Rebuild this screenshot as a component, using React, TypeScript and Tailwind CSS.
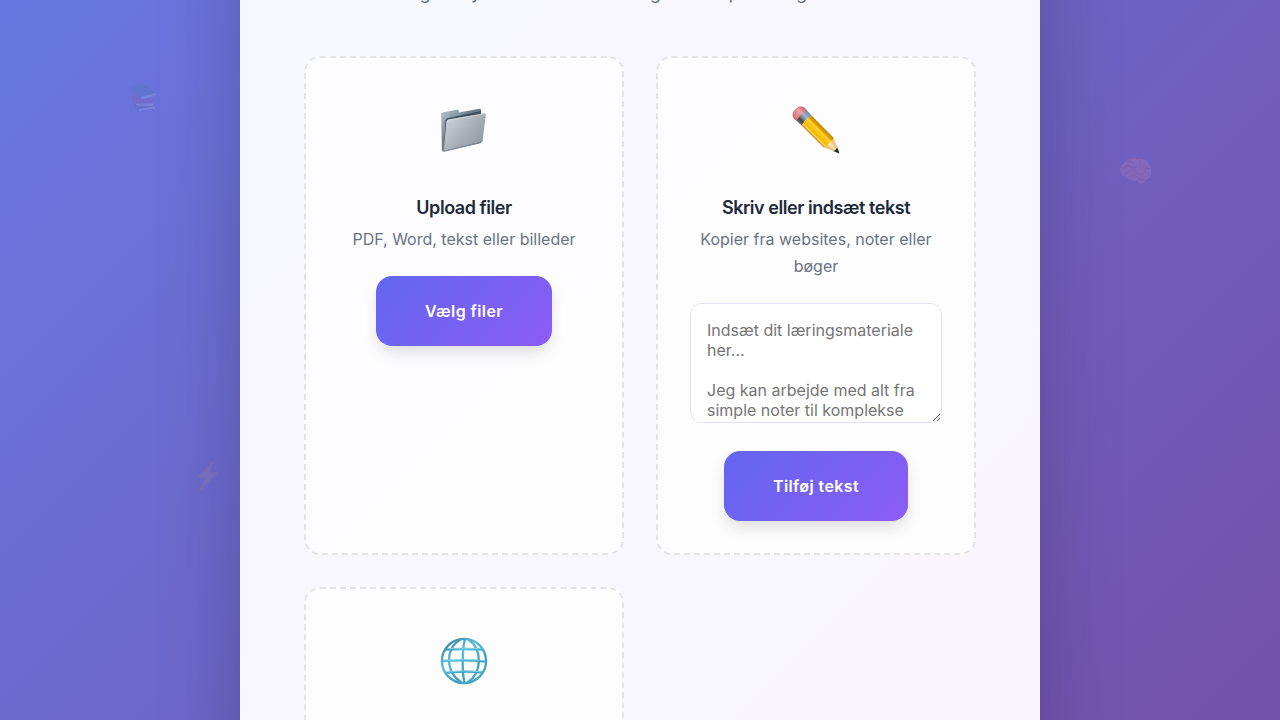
import type { ReactNode } from "react";

function FolderIcon() {
  return (
    <svg width="50" height="50" viewBox="0 0 50 50">
      <defs>
        <linearGradient id="folderBack" x1="0" y1="0" x2="1" y2="1">
          <stop offset="0" stopColor="#b9c6cf" />
          <stop offset="0.4" stopColor="#6f818e" />
          <stop offset="1" stopColor="#3e505d" />
        </linearGradient>
        <linearGradient id="folderFront" x1="0" y1="0" x2="1" y2="0.8">
          <stop offset="0" stopColor="#d3dae2" />
          <stop offset="0.5" stopColor="#adb4bc" />
          <stop offset="1" stopColor="#8c949d" />
        </linearGradient>
      </defs>
      <path d="M2.2 9.2Q2 7.8 3.5 7.5L18 4.8Q19.6 4.5 19.8 6V7.4L40.5 3.8Q42 3.6 42 5V38L5.5 46.5Q3 47 2.9 45Z" fill="url(#folderBack)" />
      <path d="M6.5 15.5L8.2 13.2 42 6V14L7 45.5H5Z" fill="#40525f" />
      <path d="M9.3 14.6L45.3 8.3Q47 8.2 46.8 10L43.6 35.5Q43.4 37.3 41.8 37.8L6 46.6Q4.5 46.8 4.8 45L7.4 17Q7.7 14.9 9.3 14.6Z" fill="url(#folderFront)" />
      <path d="M8 17Q8.2 15.3 9.6 15L45.5 8.8" fill="none" stroke="#dbe2e7" strokeWidth="0.6" />
      <path d="M5.4 46L41.8 37.2Q43 36.8 43.2 35.4" fill="none" stroke="#727a83" strokeWidth="0.8" />
    </svg>
  );
}

function PencilIcon() {
  return (
    <svg width="50" height="50" viewBox="0 0 50 50">
      <defs>
        <linearGradient id="eraser" x1="0" y1="0" x2="0" y2="1">
          <stop offset="0" stopColor="#c96570" />
          <stop offset="0.4" stopColor="#f5a2a7" />
          <stop offset="1" stopColor="#d36d77" />
        </linearGradient>
        <linearGradient id="ferrule" x1="0" y1="0" x2="0" y2="1">
          <stop offset="0" stopColor="#6682a5" />
          <stop offset="0.35" stopColor="#a0b5ca" />
          <stop offset="0.6" stopColor="#737c85" />
          <stop offset="0.75" stopColor="#414141" />
          <stop offset="1" stopColor="#77777a" />
        </linearGradient>
        <linearGradient id="barrel" x1="0" y1="0" x2="0" y2="1">
          <stop offset="0" stopColor="#b98300" />
          <stop offset="0.18" stopColor="#d99b00" />
          <stop offset="0.3" stopColor="#f3b806" />
          <stop offset="0.36" stopColor="#ffdc4c" />
          <stop offset="0.45" stopColor="#ffc817" />
          <stop offset="0.76" stopColor="#f5b60b" />
          <stop offset="0.84" stopColor="#ffdd59" />
          <stop offset="1" stopColor="#b67f00" />
        </linearGradient>
      </defs>
      <g transform="translate(7 7) rotate(45)">
        <path d="M3 -7.5Q-3.5 -7 -3.5 0T3 7.5L5.5 7Q4 0 5.5 -7Z" fill="url(#eraser)" stroke="#ad555e" strokeWidth="0.6" />
        <path d="M5 -7.3Q3.3 0 5 7.3L12 7Q10.3 0 12 -7Z" fill="url(#ferrule)" />
        <path d="M12 -7H43Q46 -4.5 45 -2Q47.5 0 45 2.5Q46 4.5 43 7H12Q10.3 0 12 -7Z" fill="url(#barrel)" />
        <path d="M43 -7L56.8 -0.8Q57.4 0 56.8 0.8L43 7Q44.8 4.8 43.8 2.3Q45.5 0 43.8 -2.3Q44.8 -4.8 43 -7Z" fill="#ecc77f" />
        <path d="M43.8 2.3Q45.5 0 43.8 -2.3L54 -0.5V0.8Z" fill="#ffe2a6" />
        <path d="M52.7 -2.6L58 -0.4Q58.6 0 58 0.4L52.7 2.6Q53.8 0 52.7 -2.6Z" fill="#252527" />
      </g>
    </svg>
  );
}

function GlobeIcon() {
  return (
    <svg width="50" height="50" viewBox="0 0 50 50" fill="none">
      <defs>
        <linearGradient id="globeStroke" x1="8" y1="2" x2="42" y2="48" gradientUnits="userSpaceOnUse">
          <stop offset="0" stopColor="#337e9b" />
          <stop offset="0.35" stopColor="#5bbdde" />
          <stop offset="0.65" stopColor="#3d9fc4" />
          <stop offset="1" stopColor="#4aa9c9" />
        </linearGradient>
      </defs>
      <g stroke="url(#globeStroke)" strokeWidth="2.3">
        <circle cx="25" cy="25" r="22.1" />
        <path d="M26 3C23 14 23 36 25.5 47" />
        <path d="M21.5 3.5C6 12 6 36 22.5 46.5" />
        <path d="M29.5 3.5C44 14 43 37 28.5 46.5" />
        <path d="M7 13.5Q25 12.5 43 13.5" />
        <path d="M3 25Q25 23.5 47 25.5" />
        <path d="M6.5 37Q25 34.5 43.5 36.5" />
      </g>
      <path d="M8.5 12.7Q25 11.8 42 12.7M4 24.2Q25 22.7 46 24.6M8 36Q25 33.8 42 35.7" stroke="#91dcef" strokeWidth="0.7" />
    </svg>
  );
}

function BooksIcon() {
  return (
    <svg width="32" height="32" viewBox="0 0 32 32">
      <path d="M7 22L12 20 27 23V26L13 28.5 7 25Z" fill="#4a5a9a" />
      <path d="M11 26L27 23.5V25.5L11 28Z" fill="#b9c4dc" />
      <path d="M3 13L8 12 24 14 25 20 9 20.5 7 24Z" fill="#a04a8a" />
      <path d="M7.5 20.5H25V22.8H8.5Z" fill="#c3bfd6" />
      <path d="M3 5.5Q8 1 16 1.5L28 9.5V12L13 16 3 8Z" fill="#4a72a8" />
      <path d="M12.5 14L28 10V12.5L13.5 16.5Z" fill="#b5c6dc" />
    </svg>
  );
}

function BrainIcon() {
  return (
    <svg width="34" height="30" viewBox="0 0 34 30" fill="none">
      <path d="M5 19C0 18 0 10 4 7C7 2 14 0 18 2C26 0 34 8 32 15C33 20 29 23 26 23C26 28 20 28 18 24C13 24 9 23 8 20Z" fill="#d68cb0" />
      <path d="M3 12Q8 7 12 10T19 8M8 5Q13 3 15 7M18 2Q23 4 21 8T27 9M31 12Q26 10 25 15T17 15Q14 11 10 14T5 18M9 20Q14 16 18 20T26 23M25 15Q30 16 29 20M18 24Q22 21 26 23" stroke="#b96a94" strokeWidth="1.1" />
    </svg>
  );
}

function BoltIcon() {
  return (
    <svg width="24" height="32" viewBox="0 0 24 32">
      <path d="M17 1.5L2.5 17 10 17.5 4 30.5 21.5 13 13.5 12.5Z" fill="#c9a596" fillOpacity="0.6" stroke="#c07a70" strokeWidth="1" />
    </svg>
  );
}

function ActionButton({ children }: { children: ReactNode }) {
  return (
    <button className="h-[70px] rounded-2xl bg-[linear-gradient(135deg,#6366f1_0%,#8b5cf6_100%)] px-[49px] text-base font-semibold tracking-[0.4px] text-white shadow-[0_8px_16px_-2px_rgba(0,0,0,0.13)]">
      {children}
    </button>
  );
}

type CardProps = { icon: ReactNode; title: string; text: string; children?: ReactNode };

function SourceCard({ icon, title, text, children }: CardProps) {
  return (
    <section className="flex h-[499px] flex-col items-center rounded-2xl border-2 border-dashed border-black/10 bg-white/75 px-8 pt-[47px] text-center">
      <div className="flex h-[50px] items-center">{icon}</div>
      <h3 className="mt-10 h-[25px] text-lg leading-[25px] font-semibold tracking-[-0.45px] text-gray-800">{title}</h3>
      <p className="mt-1.5 mb-[23px] text-base leading-[27.2px] text-gray-500">{text}</p>
      {children}
    </section>
  );
}

export default function App() {
  return (
    <div className="relative flex h-[720px] justify-center overflow-hidden font-['Inter',sans-serif]">
      <div className="absolute inset-x-0 -inset-y-[300px] bg-[linear-gradient(135deg,#667eea_0%,#764ba2_100%)]" />
      <div className="absolute top-[83px] left-[128px] opacity-20"><BooksIcon /></div>
      <div className="absolute top-[157px] left-[1119px] opacity-20"><BrainIcon /></div>
      <div className="absolute top-[460px] left-[196px] opacity-25"><BoltIcon /></div>
      <main className="relative -my-[120px] w-[800px] shrink-0 bg-white/95 px-16 pt-[98px] shadow-[0_25px_80px_rgba(0,0,0,0.2)]">
        <p className="mb-12 text-center text-[17.6px] leading-[30px] tracking-[0.16px] whitespace-nowrap text-gray-500">
          Jeg analyserer dit materiale og skaber personlige kurser.
        </p>
        <div className="grid grid-cols-2 gap-8">
          <SourceCard icon={<FolderIcon />} title="Upload filer" text="PDF, Word, tekst eller billeder">
            <ActionButton>Vælg filer</ActionButton>
          </SourceCard>
          <SourceCard icon={<PencilIcon />} title="Skriv eller indsæt tekst" text="Kopier fra websites, noter eller bøger">
            <textarea
              className="mb-7 h-[120px] w-full shrink-0 resize-y rounded-xl border border-[#e0e0fb] bg-white p-4 text-base leading-5 placeholder:text-[#757575]"
              placeholder={"Indsæt dit læringsmateriale her...\n\nJeg kan arbejde med alt fra simple noter til komplekse tekster"}
            />
            <ActionButton>Tilføj tekst</ActionButton>
          </SourceCard>
          <SourceCard icon={<GlobeIcon />} title="Hent fra web" text="Indsæt et link til en artikel" />
        </div>
      </main>
    </div>
  );
}
